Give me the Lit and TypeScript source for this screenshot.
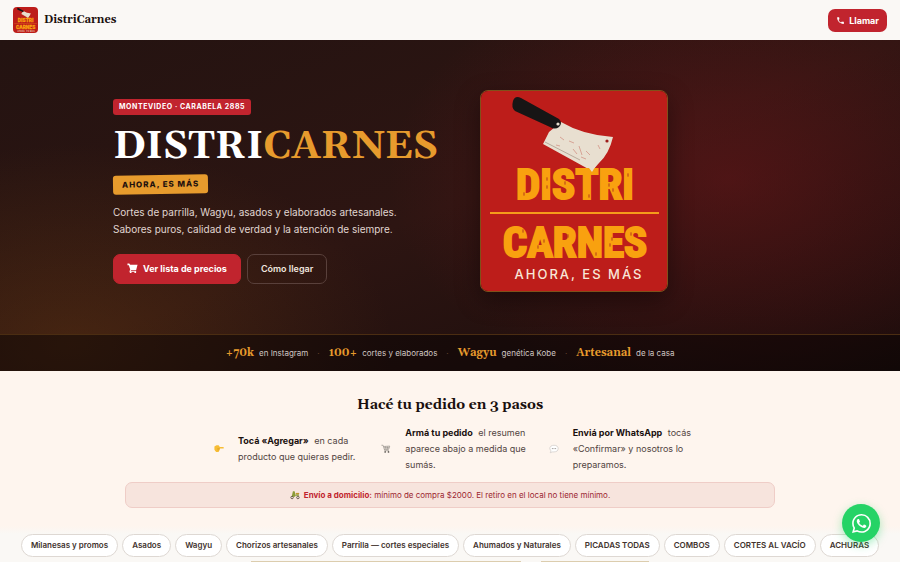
import { LitElement, html, svg, css } from "lit";
import { customElement } from "lit/decorators.js";

const SERIF = css`Georgia, Gelasio, "Liberation Serif", serif`;

@customElement("brand-logo")
export class BrandLogo extends LitElement {
  static styles = css`
    :host { display: block; }
    svg { display: block; width: 100%; height: auto; }
    .name {
      font: 700 43px "Roboto Condensed", "Liberation Sans Narrow", "DejaVu Sans Condensed", sans-serif;
      fill: #f9a10f; stroke: #f9a10f; stroke-width: 2; text-anchor: middle;
    }
    .tag { font: 500 13px Inter, sans-serif; letter-spacing: 2px; fill: #f8e6d8; text-anchor: middle; }
  `;
  render() {
    return html`<svg viewBox="0 0 186 200" role="img" aria-label="DistriCarnes">
      <rect width="186" height="200" fill="#bd1d1a" />
      <g>
        <path d="M80 31 Q102 44 132 46 Q128 63 118 72 L111 80 L62 53 L68 41 Z" fill="#e8dfd0" />
        <path d="M64 51 L99 69" stroke="#b9ab9c" stroke-width="1" fill="none" />
        <path d="M92 58l4 5M98 55l3 9M105 60l4 4M79 46l4 3M117 54l2 4M88 50l5 2M100 66l5 2M75 54l4 1" stroke="#d7a496" stroke-width="1" fill="none" />
        <circle cx="126" cy="50" r="1.6" fill="#9e1d1a" />
        <path d="M32 10 Q34 4 40 7 L78 28 Q82 32 78 36 Q74 39 69 36 L34 20 Q30 17 32 10Z" fill="#171515" />
        <circle cx="77" cy="33" r="1.6" fill="#e8dfd0" />
      </g>
      <text class="name" x="94" y="108">DISTRI</text>
      <path d="M108 77L116 73L111 81Z" fill="#e8dfd0" />
      <rect x="9" y="121" width="169" height="2" fill="#f59b1b" />
      <text class="name" x="94" y="166">CARNES</text>
      <g fill="#b9421b">
        ${[[43, 103], [66, 88], [66, 96], [84, 92], [108, 105], [128, 94], [132, 99], [147, 84], [42, 140], [57, 156], [63, 150], [87, 145], [106, 158], [115, 163], [129, 154], [131, 148], [150, 143]].map(
          ([x, y]) => svg`<ellipse cx=${x} cy=${y} rx="1" ry="2" opacity="0.6" />`
        )}
      </g>
      <text class="tag" x="98" y="188">AHORA, ES MÁS</text>
    </svg>`;
  }
}

const phone = svg`<path fill="currentColor" d="M6.6 10.8c1.4 2.8 3.8 5.1 6.6 6.6l2.2-2.2c.3-.3.7-.4 1-.2 1.1.4 2.3.6 3.6.6.6 0 1 .4 1 1V20c0 .6-.4 1-1 1C10.600 21 3 13.400 3 4c0-.6.4-1 1-1h3.500c.6 0 1 .4 1 1 0 1.200.2 2.400.6 3.600.1.3 0 .7-.2 1z"/>`;

const STATS = [
  ["+70k", "en Instagram"],
  ["100+", "cortes y elaborados"],
  ["Wagyu", "genética Kobe"],
  ["Artesanal", "de la casa"],
];

const STEPS = [
  {
    icon: svg`<path d="M23 6l-5-3h-5l-3 4H2c-2 0-2 4 0 4h8v2l1 2 1 2 1 2h6l4-5z" fill="#f7bd35"/><path d="M10 11h6M11 14h5" stroke="#c98a20"/>`,
    flip: true,
    title: "Tocá «Agregar»", text: "en cada producto que quieras pedir.",
  },
  {
    icon: svg`<path d="M1 3h4l4 13h10M6 6l15-1-3 8H8M7 9h13M11 6l1 7M16 6l-1 7" fill="none" stroke="#8b8681" stroke-width="1.500"/><circle cx="10" cy="19" r="2" fill="#625d59"/><circle cx="18" cy="19" r="2" fill="#625d59"/>`,
    title: "Armá tu pedido", text: "el resumen aparece abajo a medida que sumás.",
  },
  {
    icon: svg`<path d="M12 3c6 0 10 3 10 8s-4 8-10 8H8l-5 2 2-5c-2-1-3-3-3-5 0-5 4-8 10-8z" fill="#fff" stroke="#c9c4c0" stroke-width="1.500"/><path d="M7 11h2M11 11h2M15 11h2" stroke="#77716e" stroke-width="2"/>`,
    title: "Enviá por WhatsApp", text: "tocás «Confirmar» y nosotros lo preparamos.",
  },
];

const CATEGORIES = [
  "Milanesas y promos", "Asados", "Wagyu", "Chorizos artesanales",
  "Parrilla — cortes especiales", "Ahumados y Naturales", "PICADAS TODAS",
  "COMBOS", "CORTES AL VACÍO", "ACHURAS",
];

@customElement("app-root")
export class AppRoot extends LitElement {
  static styles = css`
    :host {
      display: block; min-height: 100vh; overflow: hidden;
      background: #fef5ee; color: #1a100e;
      font-family: Inter, sans-serif; font-size: 8px;
    }
    * { box-sizing: border-box; }
    h1, h2, p, ul { margin: 0; padding: 0; }
    ul { list-style: none; }
    a { color: inherit; text-decoration: none; }

    .top {
      display: flex; align-items: center; justify-content: space-between;
      height: 40px; padding: 0 13px; background: #faf8f5;
    }
    .brand { display: flex; align-items: center; gap: 6px; font: 700 11px ${SERIF}; }
    .brand brand-logo { width: 25px; border-radius: 4px; overflow: hidden; }
    .call {
      display: flex; align-items: center; gap: 4px; height: 23px; padding: 0 8px;
      border-radius: 7px; background: #c1242e; color: #fff; font-size: 9px; font-weight: 700;
    }
    .call svg { width: 9px; height: 9px; }

    .hero {
      color: #fff;
      background:
        radial-gradient(ellipse 340px 220px at 81% 42%, rgba(115, 22, 26, .5), rgba(115, 22, 26, 0)),
        radial-gradient(ellipse 320px 200px at 8% 92%, rgba(110, 62, 16, .38), rgba(110, 62, 16, 0)),
        linear-gradient(160deg, #241311 0%, #2d1512 50%, #190c0b 100%);
    }
    .intro {
      display: flex; align-items: center; gap: 42px;
      max-width: 674px; min-height: 294px; margin: 0 auto; padding-top: 8px;
    }
    .copy { display: flex; flex-direction: column; align-items: flex-start; }
    .place {
      padding: 0 6px; border-radius: 3px; background: #c1242e;
      font-size: 7px; line-height: 16px; font-weight: 700; letter-spacing: .08em;
    }
    h1 { margin-top: 7px; font: 700 39px/50px ${SERIF}; }
    h1 span { color: #e79b2d; }
    .slogan {
      margin-top: 3px; padding: 0 9px; border-radius: 3px; background: #e79b2d; color: #1f110d;
      font-size: 8px; line-height: 19px; font-weight: 800; letter-spacing: .12em; transform: rotate(-1deg);
    }
    .lead { margin-top: 10px; font-size: 10px; line-height: 17px; color: #e0d6d1; }
    .actions { display: flex; gap: 6px; margin-top: 16px; }
    .btn {
      display: flex; align-items: center; gap: 5px; height: 30px; padding: 0 13px;
      border: 1px solid #59403b; border-radius: 7px; font-size: 9px; font-weight: 600; color: #efe5df;
    }
    .btn.primary { background: #c1242e; border-color: #c1242e; color: #fff; font-weight: 700; }
    .btn svg { width: 11px; height: 11px; }
    .intro > brand-logo {
      flex: none; width: 188px; border: 1px solid #80501a; border-radius: 8px; overflow: hidden;
      box-shadow: 0 8px 24px rgba(0, 0, 0, .4);
    }
    .stats {
      display: flex; justify-content: center; gap: 9px; height: 37px; align-items: center;
      border-top: 1px solid #4b2d12; background: rgba(10, 4, 4, .5); color: #d0c6c2;
    }
    .stats li { display: flex; align-items: baseline; gap: 5px; }
    .stats b { font: 700 11px ${SERIF}; color: #e79b2d; }
    .dot { color: #6d4a35; }

    .order { padding: 24px 16px 0; }
    h2 { text-align: center; font: 700 14px/20px ${SERIF}; }
    .steps {
      display: grid; grid-template-columns: repeat(3, 1fr); gap: 10px;
      align-items: center; max-width: 492px; margin: 10px auto 0;
    }
    .steps li {
      display: flex; align-items: center; gap: 14px;
      font-size: 9px; line-height: 16px; color: #51443f;
    }
    .steps svg { flex: none; width: 10px; height: 10px; margin-left: 10px; }
    .steps .flip { transform: scaleX(-1); }
    .steps b { color: #1a100e; margin-right: 3px; font-weight: 700; }
    .notice {
      display: flex; align-items: center; justify-content: center; gap: 4px;
      max-width: 650px; height: 26px; margin: 9px auto 0; border: 1px solid #efcdc7;
      border-radius: 7px; background: #f7e4dd; color: #9c2631;
    }
    .notice svg { width: 10px; height: 10px; }
    .notice b { color: #c1242e; }

    .cats {
      display: flex; justify-content: center; gap: 4px; margin-top: 18px; padding: 8px 20px 4px;
      background: linear-gradient(#fef5ee, #faf8f5 8px);
    }
    .cats a {
      height: 23px; padding: 0 9px; border: 1px solid #ded8d3; border-radius: 12px;
      background: #fff; color: #41322d; line-height: 21px; font-weight: 600; white-space: nowrap;
    }
    .cards { display: flex; justify-content: center; gap: 20px; background: #faf8f5; }
    .cards div { width: 30%; height: 1px; background: #dccdae; }
    .cards div + div { width: 12%; }

    .wa {
      position: fixed; right: 20px; bottom: 20px; display: grid; place-items: center;
      width: 38px; height: 38px; border-radius: 50%; background: #25d366; color: #fff;
      box-shadow: 0 3px 10px rgba(37, 211, 102, .4);
    }
    .wa svg { width: 19px; height: 19px; }
  `;

  render() {
    return html`
      <header class="top">
        <a class="brand" href="#inicio"><brand-logo></brand-logo>DistriCarnes</a>
        <a class="call" href="tel:"><svg viewBox="0 0 24 24" aria-hidden="true">${phone}</svg>Llamar</a>
      </header>
      <section class="hero" id="inicio">
        <div class="intro">
          <div class="copy">
            <span class="place">MONTEVIDEO · CARABELA 2885</span>
            <h1>DISTRI<span>CARNES</span></h1>
            <span class="slogan">AHORA, ES MÁS</span>
            <p class="lead">Cortes de parrilla, Wagyu, asados y elaborados artesanales.<br />Sabores puros, calidad de verdad y la atención de siempre.</p>
            <div class="actions">
              <a class="btn primary" href="#precios">
                <svg viewBox="0 0 24 24" aria-hidden="true" fill="currentColor"><path d="M1 1h4l2 3h16l-3 11H9l-1 2h12v2H5l2-5L4 5H1z"/><circle cx="8" cy="20" r="2"/><circle cx="18" cy="20" r="2"/></svg>
                Ver lista de precios</a>
              <a class="btn" href="#mapa">Cómo llegar</a>
            </div>
          </div>
          <brand-logo></brand-logo>
        </div>
        <ul class="stats">
          ${STATS.map(([n, t], i) => html`${i ? html`<li class="dot" aria-hidden="true">·</li>` : ""}<li><b>${n}</b><span>${t}</span></li>`)}
        </ul>
      </section>
      <section class="order">
        <h2>Hacé tu pedido en 3 pasos</h2>
        <ul class="steps">
          ${STEPS.map((s) => html`<li><svg class=${s.flip ? "flip" : ""} viewBox="0 0 24 24" aria-hidden="true">${s.icon}</svg><span><b>${s.title}</b> ${s.text}</span></li>`)}
        </ul>
        <p class="notice">
          <svg viewBox="0 0 24 24" aria-hidden="true"><path d="M7 3h4l3 11h8l-1-4h-6l-3 6H4z" fill="#8b9b37"/><path d="M14 7h8v3h-8z" fill="#c2952c"/><circle cx="5" cy="18" r="3" fill="none" stroke="#554c3e" stroke-width="2"/><circle cx="19" cy="18" r="3" fill="none" stroke="#554c3e" stroke-width="2"/></svg>
          <span><b>Envío a domicilio:</b> mínimo de compra $2000. El retiro en el local no tiene mínimo.</span>
        </p>
      </section>
      <nav class="cats" aria-label="Categorías">
        ${CATEGORIES.map((c) => html`<a href="#precios">${c}</a>`)}
      </nav>
      <section class="cards" id="precios"><div></div><div></div></section>
      <a class="wa" href="#whatsapp" aria-label="WhatsApp">
        <svg viewBox="0 0 24 24" fill="currentColor" aria-hidden="true"><path d="M17.472 14.382c-.297-.149-1.758-.867-2.030-.967-.273-.099-.471-.148-.670.150-.197.297-.767.966-.940 1.164-.173.199-.347.223-.644.075-.297-.150-1.255-.463-2.390-1.475-.883-.788-1.480-1.761-1.653-2.059-.173-.297-.018-.458.130-.606.134-.133.298-.347.446-.520.149-.174.198-.298.298-.497.099-.198.050-.371-.025-.520-.075-.149-.669-1.612-.916-2.207-.242-.579-.487-.500-.669-.510-.173-.008-.371-.010-.570-.010-.198 0-.520.074-.792.372-.272.297-1.040 1.016-1.040 2.479 0 1.462 1.065 2.875 1.213 3.074.149.198 2.096 3.200 5.077 4.487.709.306 1.262.489 1.694.625.712.227 1.360.195 1.871.118.571-.085 1.758-.719 2.006-1.413.248-.694.248-1.289.173-1.413-.074-.124-.272-.198-.570-.347m-5.421 7.403h-.004a9.870 9.870 0 01-5.031-1.378l-.361-.214-3.741.982.998-3.648-.235-.374a9.860 9.860 0 01-1.510-5.260c.001-5.450 4.436-9.884 9.888-9.884 2.640 0 5.122 1.030 6.988 2.898a9.825 9.825 0 012.893 6.994c-.003 5.450-4.437 9.884-9.885 9.884m8.413-18.297A11.815 11.815 0 0012.050 0C5.495 0 .160 5.335.157 11.892c0 2.096.547 4.142 1.588 5.945L.057 24l6.305-1.654a11.882 11.882 0 005.683 1.448h.005c6.554 0 11.890-5.335 11.893-11.893a11.821 11.821 0 00-3.480-8.413z"/></svg>
      </a>
    `;
  }
}
